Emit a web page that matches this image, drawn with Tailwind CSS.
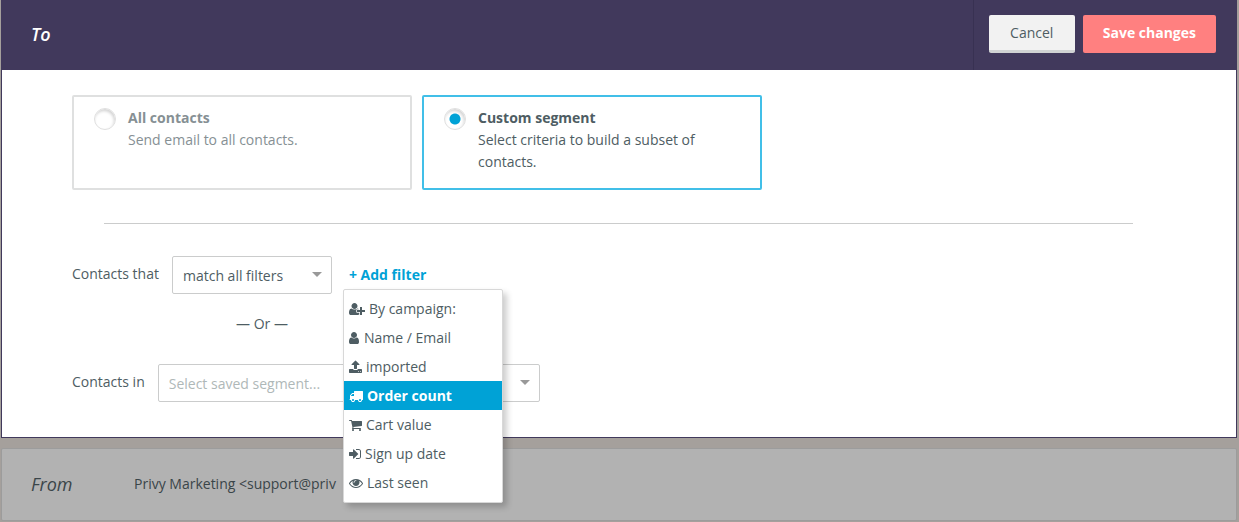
<!DOCTYPE html>
<html lang="en">
<head>
    <meta charset="UTF-8">
    <meta name="viewport" content="width=device-width, initial-scale=1.0">
    <title>Email recipients</title>
    <script src="https://cdn.jsdelivr.net/npm/@tailwindcss/browser@4"></script>
</head>
<body class="min-h-screen bg-[#a5a09c] pl-px pr-0.5 text-sm text-[#4e5d63] font-['Open_Sans',sans-serif]">
    <!-- to section -->
    <section class="border border-t-0 border-[#41395c] bg-white">
        <!-- header -->
        <header class="flex h-[70px] items-stretch justify-between bg-[#41395c] pl-[29px]">
            <h2 class="self-center pb-0.5 text-lg font-semibold italic text-white">To</h2>
            <div class="flex items-start gap-2 border-l border-[#383152] pt-[15px] pl-[15px] pr-5">
                <button type="button" class="h-[38px] min-w-[86px] rounded-xs border-b-3 border-[#d0d3d3] bg-[#f2f2f2] px-5 text-sm">Cancel</button>
                <button type="button" class="h-[38px] rounded-xs bg-[#ff8080] px-5 pb-0.5 text-sm font-bold text-white">Save changes</button>
            </div>
        </header>
        <!-- end of header -->
        <div class="px-[70px] pt-[25px] pb-[35px]">
            <!-- audience options -->
            <div class="flex gap-2.5">
                <label class="flex h-[95px] w-[340px] gap-3 rounded-xs border-2 border-[#dfe0e0] pt-2.5 pl-5 pr-5 text-[#869094]">
                    <input type="radio" name="audience" class="mt-px size-[22px] shrink-0 appearance-none rounded-full border border-[#e0e0e0] bg-white shadow-[inset_-1px_2px_3px_#d4d4d4]">
                    <span class="leading-[22px]"><strong class="block font-bold">All contacts</strong>Send email to all contacts.</span>
                </label>
                <label class="flex h-[95px] w-[340px] gap-3 rounded-xs border-2 border-[#41bfe8] pt-2.5 pl-5 pr-5">
                    <input type="radio" name="audience" checked class="mt-px size-[22px] shrink-0 appearance-none rounded-full border border-[#e0e0e0] bg-[radial-gradient(circle,#00a2d6_5px,transparent_6px)] shadow-[inset_-1px_2px_3px_#d4d4d4]">
                    <span class="leading-[22px]"><strong class="block font-bold">Custom segment</strong>Select criteria to build a subset of contacts.</span>
                </label>
            </div>
            <!-- end of audience options -->
            <hr class="mt-[33px] mb-8 ml-8 mr-[33px] border-[#cbcccc]">
            <!-- filters -->
            <div class="flex items-center">
                <label for="match" class="mr-[13px] pb-0.5">Contacts that</label>
                <div class="relative">
                    <select id="match" class="h-[38px] w-40 appearance-none rounded-xs border border-[#cbcccc] bg-white px-2.5 pt-0.5 text-sm">
                        <option>match all filters</option>
                        <option>match any filter</option>
                    </select>
                    <svg class="pointer-events-none absolute top-4 right-2.5 h-[5px] w-2.5 fill-[#999]" viewBox="0 0 10 5"><path d="M0 0h10L5 5z"/></svg>
                </div>
                <div class="relative ml-[17px]">
                    <button type="button" class="text-sm font-bold text-[#00a2d6]" aria-haspopup="menu" aria-expanded="true">+ Add filter</button>
                    <!-- filter menu -->
                    <div role="menu" class="absolute top-6 -left-1.5 z-10 w-40 rounded-xs border border-[#d8d8d8] bg-white pt-1 pb-[5px] shadow-[4px_4px_6px_rgba(0,0,0,0.2)]">
                        <button type="button" role="menuitem" class="flex h-[29px] w-full items-center gap-1 px-[5px]">
                            <svg class="h-3.5 w-4 fill-current" viewBox="0 0 2048 1792"><path d="M704 896q-159 0-271.500-112.500t-112.500-271.500 112.500-271.500 271.500-112.500 271.500 112.500 112.500 271.500-112.500 271.500-271.500 112.500zm960 128h352q13 0 22.500 9.500t9.500 22.500v192q0 13-9.500 22.500t-22.500 9.500h-352v352q0 13-9.500 22.500t-22.500 9.500h-192q-13 0-22.500-9.500t-9.500-22.500v-352h-352q-13 0-22.500-9.500t-9.500-22.500v-192q0-13 9.500-22.500t22.500-9.500h352v-352q0-13 9.500-22.500t22.500-9.500h192q13 0 22.500 9.500t9.500 22.500v352zm-736 224q0 52 38 90t90 38h256v238q-68 50-171 50h-874q-121 0-194-69t-73-190q0-53 3.500-103.500t14-109 26.500-108.500 43-97.500 62-81 85.500-53.500 111.500-20q19 0 39 17 79 61 154.500 91.500t164.500 30.500 164.500-30.500 154.500-91.500q20-17 39-17 132 0 217 96h-223q-52 0-90 38t-38 90v192z"/></svg>
                            By campaign:
                        </button>
                        <button type="button" role="menuitem" class="flex h-[29px] w-full items-center gap-1 px-[5px]">
                            <svg class="h-3.5 w-[11px] fill-current" viewBox="256 0 1408 1792"><path d="M1536 1399q0 109-62.500 187t-150.500 78h-854q-88 0-150.500-78t-62.500-187q0-85 8.500-160.500t31.500-152 58.500-131 94-89 134.500-34.500q131 128 313 128t313-128q76 0 134.500 34.500t94 89 58.500 131 31.500 152 8.500 160.500zm-256-887q0 159-112.500 271.500t-271.500 112.500-271.500-112.500-112.500-271.500 112.500-271.500 271.500-112.500 271.500 112.500 112.500 271.500z"/></svg>
                            Name / Email
                        </button>
                        <button type="button" role="menuitem" class="flex h-[29px] w-full items-center gap-1 px-[5px]">
                            <svg class="h-3.5 w-[13px] fill-current" viewBox="64 0 1664 1792"><path d="M1344 1472q0-26-19-45t-45-19-45 19-19 45 19 45 45 19 45-19 19-45zm256 0q0-26-19-45t-45-19-45 19-19 45 19 45 45 19 45-19 19-45zm128-224v320q0 40-28 68t-68 28h-1472q-40 0-68-28t-28-68v-320q0-40 28-68t68-28h427q21 56 70.500 92t110.500 36h256q61 0 110.500-36t70.500-92h427q40 0 68 28t28 68zm-325-648q-17 40-59 40h-256v448q0 26-19 45t-45 19h-256q-26 0-45-19t-19-45v-448h-256q-42 0-59-40-17-39 14-69l448-448q18-19 45-19t45 19l448 448q31 30 14 69z"/></svg>
                            imported
                        </button>
                        <button type="button" role="menuitem" class="flex h-[29px] w-full items-center gap-1 bg-[#00a2d6] px-[5px] font-bold text-white">
                            <svg class="h-3.5 w-3.5 fill-current" viewBox="0 0 1792 1792"><path d="M640 1408q0-52-38-90t-90-38-90 38-38 90 38 90 90 38 90-38 38-90zm-384-512h384v-256h-158q-13 0-22 9l-195 195q-9 9-9 22v30zm1280 512q0-52-38-90t-90-38-90 38-38 90 38 90 90 38 90-38 38-90zm256-1088v1024q0 15-4 26.500t-13.500 18.500-16.500 11.500-23.500 6-22.500 2-25.500 0-22.500-.5q0 106-75 181t-181 75-181-75-75-181h-384q0 106-75 181t-181 75-181-75-75-181h-64q-3 0-22.500.5t-25.500 0-22.500-2-23.500-6-16.500-11.500-13.500-18.500-4-26.500q0-26 19-45t45-19v-320q0-8-.5-35t0-38 2.500-34.500 6.500-37 14-30.500 22.500-30l198-198q19-19 50.500-32t58.500-13h160v-192q0-26 19-45t45-19h1024q26 0 45 19t19 45z"/></svg>
                            Order count
                        </button>
                        <button type="button" role="menuitem" class="flex h-[29px] w-full items-center gap-1 px-[5px]">
                            <svg class="h-3.5 w-[13px] fill-current" viewBox="64 0 1664 1792"><path d="M704 1536q0 52-38 90t-90 38-90-38-38-90 38-90 90-38 90 38 38 90zm896 0q0 52-38 90t-90 38-90-38-38-90 38-90 90-38 90 38 38 90zm128-1088v512q0 24-16.500 42.500t-40.500 21.500l-1044 122q13 60 13 70 0 16-24 64h920q26 0 45 19t19 45-19 45-45 19h-1024q-26 0-45-19t-19-45q0-11 8-31.500t16-36 21.500-40 15.500-29.500l-177-823h-204q-26 0-45-19t-19-45 19-45 45-19h256q16 0 28.500 6.500t19.500 15.500 13 24.500 8 26 5.500 29.500 4.500 26h1201q26 0 45 19t19 45z"/></svg>
                            Cart value
                        </button>
                        <button type="button" role="menuitem" class="flex h-[29px] w-full items-center gap-1 px-[5px]">
                            <svg class="h-3.5 w-3 fill-current" viewBox="128 0 1536 1792"><path d="M1312 896q0 26-19 45l-544 544q-19 19-45 19t-45-19-19-45v-288h-448q-26 0-45-19t-19-45v-384q0-26 19-45t45-19h448v-288q0-26 19-45t45-19 45 19l544 544q19 19 19 45zm352-352v704q0 119-84.500 203.500t-203.500 84.500h-320q-13 0-22.500-9.500t-9.500-22.500q0-4-1-20t-.5-26.500 3-23.500 10-19.500 20.500-6.500h320q66 0 113-47t47-113v-704q0-66-47-113t-113-47h-312l-11.500-1-11.500-3-8-5.500-7-9-2-13.500q0-4-1-20t-.5-26.500 3-23.500 10-19.500 20.500-6.500h320q119 0 203.500 84.500t84.500 203.500z"/></svg>
                            Sign up date
                        </button>
                        <button type="button" role="menuitem" class="flex h-[29px] w-full items-center gap-1 px-[5px]">
                            <svg class="h-3.5 w-3.5 fill-current" viewBox="0 0 1792 1792"><path d="M1664 960q-152-236-381-353 61 104 61 225 0 185-131.500 316.500t-316.500 131.500-316.500-131.500-131.500-316.500q0-121 61-225-229 117-381 353 133 205 333.500 326.500t434.500 121.500 434.500-121.500 333.500-326.500zm-720-384q0-20-14-34t-34-14q-125 0-214.500 89.500t-89.500 214.500q0 20 14 34t34 14 34-14 14-34q0-86 61-147t147-61q20 0 34-14t14-34zm848 384q0 34-20 69-140 230-376.500 368.500t-499.500 138.500-499.500-139-376.500-368q-20-35-20-69t20-69q140-229 376.500-368t499.500-139 499.500 139 376.500 368q20 35 20 69z"/></svg>
                            Last seen
                        </button>
                    </div>
                    <!-- end of filter menu -->
                </div>
            </div>
            <p class="mt-[15px] mb-[25px] ml-[164px] leading-[30px]">— Or —</p>
            <div class="flex items-center">
                <label for="segment" class="mr-[13px] pb-0.5">Contacts in</label>
                <div class="relative">
                    <select id="segment" class="h-[38px] w-[382px] appearance-none rounded-xs border border-[#cbcccc] bg-white px-2.5 pt-0.5 text-sm text-[#afb8b8]">
                        <option>Select saved segment...</option>
                    </select>
                    <svg class="pointer-events-none absolute top-4 right-2.5 h-[5px] w-2.5 fill-[#999]" viewBox="0 0 10 5"><path d="M0 0h10L5 5z"/></svg>
                </div>
            </div>
            <!-- end of filters -->
        </div>
    </section>
    <!-- end of to section -->
    <!-- from section -->
    <section class="mt-2.5 flex h-[73px] items-center rounded-xs border border-[#9c9c9c] bg-[#b2b2b2] pb-0.5 pl-[29px] text-[#3a4549]">
        <h2 class="w-[103px] text-lg italic">From</h2>
        <p>Privy Marketing &lt;support@priv</p>
    </section>
    <!-- end of from section -->
</body>
</html>
